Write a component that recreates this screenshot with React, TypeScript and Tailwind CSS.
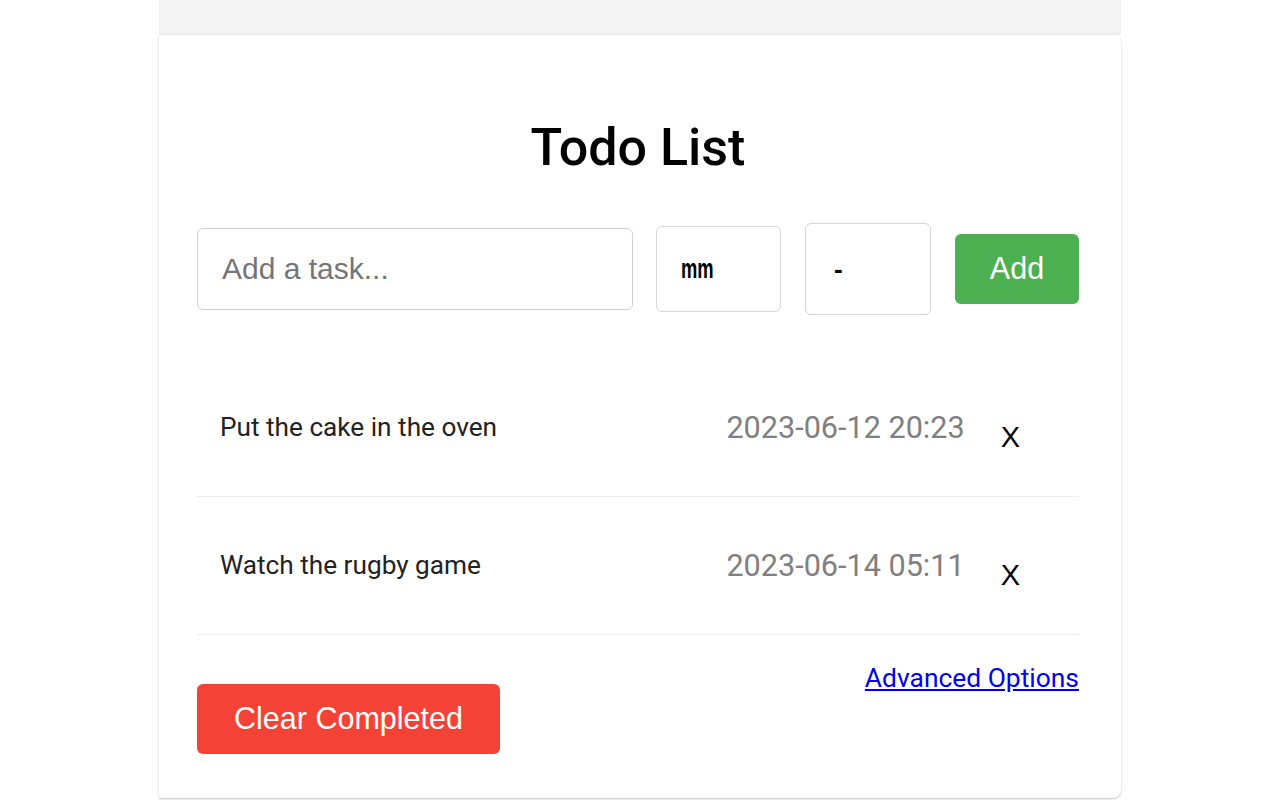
import { useState } from "react"

type Task = { id: number; text: string; due: string }

const initial: Task[] = [
  { id: 1, text: "Put the cake in the oven", due: "2023-06-12 20:23" },
  { id: 2, text: "Watch the rugby game", due: "2023-06-14 05:11" },
]

export default function App() {
  const [tasks, setTasks] = useState<Task[]>(initial)
  const [draft, setDraft] = useState("")

  return (
    <div className="min-h-screen bg-white font-['Roboto',sans-serif]">
      <div className="mx-auto w-[962px]">
        {/* top strip */}
        <div className="h-[35px] bg-[#f4f4f4] shadow-[inset_0_-2px_2px_rgba(0,0,0,0.03)]" />

        {/* card */}
        <div className="h-[763px] rounded-r-lg bg-white pl-[38px] pr-[42px] pt-[87px] shadow-[0_1px_2px_rgba(0,0,0,0.25)]">
          <h1 className="text-center text-[52px] font-medium leading-none text-black">
            Todo List
          </h1>

          {/* input row */}
          <div className="mt-[49px] flex items-center">
            <input
              value={draft}
              onChange={(e) => setDraft(e.target.value)}
              placeholder="Add a task..."
              className="h-[82px] w-[436px] rounded-md border-[1.5px] border-[#d2d2d2] pl-[24px] font-['Liberation_Sans',Arial,sans-serif] text-[30px] text-black outline-none placeholder:text-[#757575]"
            />
            <div className="ml-[23px] flex h-[86px] w-[125px] items-center rounded-md border-[1.5px] border-[#d6d6d6] pl-[24px]">
              <span className="inline-block origin-left scale-x-[0.68] font-['Liberation_Sans',Arial,sans-serif] text-[27px] font-bold leading-none text-black">
                mm
              </span>
            </div>
            <div className="ml-[24px] flex h-[92px] w-[126px] items-center rounded-md border-[1.5px] border-[#d6d6d6] pl-[28px]">
              <span className="font-['Liberation_Sans',Arial,sans-serif] text-[26px] font-bold leading-none text-black">
                -
              </span>
            </div>
            <button className="ml-[24px] h-[70px] w-[124px] rounded-md bg-[#4caf50] font-['Liberation_Sans',Arial,sans-serif] text-[30.5px] text-white">
              Add
            </button>
          </div>

          {/* tasks */}
          <ul className="mt-[44px]">
            {tasks.map((t) => (
              <li
                key={t.id}
                className="flex h-[138px] items-center border-b border-[#eeeeee] pl-[23px]"
              >
                <span className="flex-1 text-[26.2px] text-[#222]">{t.text}</span>
                <span className="text-[30.6px] text-[#808080]">{t.due}</span>
                <button
                  onClick={() => setTasks(tasks.filter((x) => x.id !== t.id))}
                  className="ml-[36px] mr-[59px] mt-[20px] font-['Liberation_Sans',Arial,sans-serif] text-[29px] leading-none text-black"
                >
                  X
                </button>
              </li>
            ))}
          </ul>

          {/* footer */}
          <div className="flex items-start justify-between">
            <button
              onClick={() => setTasks([])}
              className="mt-[49px] h-[70px] w-[303px] rounded-md bg-[#f44336] font-['Liberation_Sans',Arial,sans-serif] text-[30.5px] text-white"
            >
              Clear Completed
            </button>
            <a href="#" className="mt-[30px] text-[26.4px] leading-none text-[#0000ee] underline">
              Advanced Options
            </a>
          </div>
        </div>
      </div>
    </div>
  )
}
